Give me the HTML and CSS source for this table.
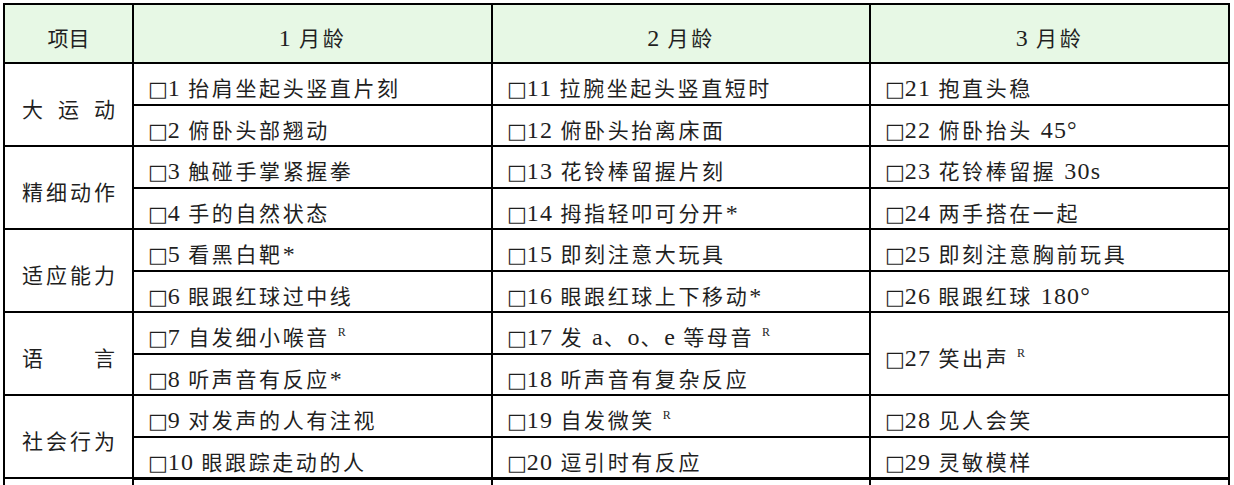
FILE: index.html
```html
<!DOCTYPE html>
<html lang="zh-CN">
<head>
<meta charset="utf-8">
<title>1-3月龄发育评估</title>
<link rel="stylesheet" href="styles.css">
</head>
<body>
<div class="wrap">
<table class="grid">
  <colgroup>
    <col class="c1"><col class="c2"><col class="c3"><col class="c4">
  </colgroup>
  <thead>
    <tr class="head">
      <th class="hcat">项目</th>
      <th><span class="l">1 </span>月龄</th>
      <th><span class="l">2 </span>月龄</th>
      <th><span class="l">3 </span>月龄</th>
    </tr>
  </thead>
  <tbody>
    <tr>
      <td class="cat" rowspan="2"><span class="lab">大运动</span></td>
      <td><span class="bx">□</span><span class="l">1 </span>抬肩坐起头竖直片刻</td>
      <td><span class="bx">□</span><span class="l">11 </span>拉腕坐起头竖直短时</td>
      <td><span class="bx">□</span><span class="l">21 </span>抱直头稳</td>
    </tr>
    <tr>
      <td><span class="bx">□</span><span class="l">2 </span>俯卧头部翘动</td>
      <td><span class="bx">□</span><span class="l">12 </span>俯卧头抬离床面</td>
      <td><span class="bx">□</span><span class="l">22 </span>俯卧抬头 <span class="l">45°</span></td>
    </tr>
    <tr>
      <td class="cat" rowspan="2"><span class="lab">精细动作</span></td>
      <td><span class="bx">□</span><span class="l">3 </span>触碰手掌紧握拳</td>
      <td><span class="bx">□</span><span class="l">13 </span>花铃棒留握片刻</td>
      <td><span class="bx">□</span><span class="l">23 </span>花铃棒留握 <span class="l">30s</span></td>
    </tr>
    <tr>
      <td><span class="bx">□</span><span class="l">4 </span>手的自然状态</td>
      <td><span class="bx">□</span><span class="l">14 </span>拇指轻叩可分开<span class="l">*</span></td>
      <td><span class="bx">□</span><span class="l">24 </span>两手搭在一起</td>
    </tr>
    <tr>
      <td class="cat" rowspan="2"><span class="lab">适应能力</span></td>
      <td><span class="bx">□</span><span class="l">5 </span>看黑白靶<span class="l">*</span></td>
      <td><span class="bx">□</span><span class="l">15 </span>即刻注意大玩具</td>
      <td><span class="bx">□</span><span class="l">25 </span>即刻注意胸前玩具</td>
    </tr>
    <tr>
      <td><span class="bx">□</span><span class="l">6 </span>眼跟红球过中线</td>
      <td><span class="bx">□</span><span class="l">16 </span>眼跟红球上下移动<span class="l">*</span></td>
      <td><span class="bx">□</span><span class="l">26 </span>眼跟红球 <span class="l">180°</span></td>
    </tr>
    <tr>
      <td class="cat" rowspan="2"><span class="lab">语言</span></td>
      <td><span class="bx">□</span><span class="l">7 </span>自发细小喉音 <sup class="r">R</sup></td>
      <td><span class="bx">□</span><span class="l">17 </span>发 <span class="l">a</span>、<span class="l">o</span>、<span class="l">e </span>等母音 <sup class="r">R</sup></td>
      <td rowspan="2"><span class="bx">□</span><span class="l">27 </span>笑出声 <sup class="r">R</sup></td>
    </tr>
    <tr>
      <td><span class="bx">□</span><span class="l">8 </span>听声音有反应<span class="l">*</span></td>
      <td><span class="bx">□</span><span class="l">18 </span>听声音有复杂反应</td>
    </tr>
    <tr>
      <td class="cat" rowspan="2"><span class="lab">社会行为</span></td>
      <td><span class="bx">□</span><span class="l">9 </span>对发声的人有注视</td>
      <td><span class="bx">□</span><span class="l">19 </span>自发微笑 <sup class="r">R</sup></td>
      <td><span class="bx">□</span><span class="l">28 </span>见人会笑</td>
    </tr>
    <tr class="end">
      <td><span class="bx">□</span><span class="l">10 </span>眼跟踪走动的人</td>
      <td><span class="bx">□</span><span class="l">20 </span>逗引时有反应</td>
      <td><span class="bx">□</span><span class="l">29 </span>灵敏模样</td>
    </tr>
    <tr class="more">
      <td></td><td></td><td></td><td></td>
    </tr>
  </tbody>
</table>
</div>
</body>
</html>
```

FILE: styles.css
```css
body {
  margin: 0;
  background: #ffffff;
}

.wrap {
  padding: 3px 0 0 3px;
}

.grid {
  border-collapse: collapse;
  table-layout: fixed;
  width: 1225px;
  font-family: "Liberation Serif", "Noto Sans CJK SC", serif;
  color: #1f1f1f;
}

.c1 { width: 129px; }
.c2 { width: 359px; }
.c3 { width: 378px; }
.c4 { width: 359px; }

.grid th,
.grid td {
  border: 2px solid #000000;
  padding: 10px 0 0 15px;
  vertical-align: middle;
  font-size: 21px;
  font-weight: normal;
  letter-spacing: 2.6px;
  line-height: 26px;
  white-space: nowrap;
  text-align: left;
}

.head {
  height: 59px;
}

.grid th {
  background: #e7f8e5;
  text-align: center;
  padding-left: 0;
}

.grid tbody tr {
  height: 41.5px;
}

.grid td.cat,
.grid th.hcat {
  text-align: center;
  padding-left: 0;
  letter-spacing: 0;
}

.lab {
  display: inline-block;
  width: 93px;
  text-align: justify;
  text-align-last: justify;
  letter-spacing: 0;
}

.bx {
  font-family: "DejaVu Sans", sans-serif;
  font-size: 21px;
  line-height: 0;
  letter-spacing: 0;
  margin-left: -1px;
  margin-right: 0;
}

.l {
  font-size: 24px;
  letter-spacing: 1.2px;
}

.r {
  font-size: 12px;
  letter-spacing: 0;
  vertical-align: 9px;
  line-height: 0;
}

.grid tr.end td {
  border-bottom: 3px solid #000000;
}

.grid tr.more {
  height: 20px;
}
```
